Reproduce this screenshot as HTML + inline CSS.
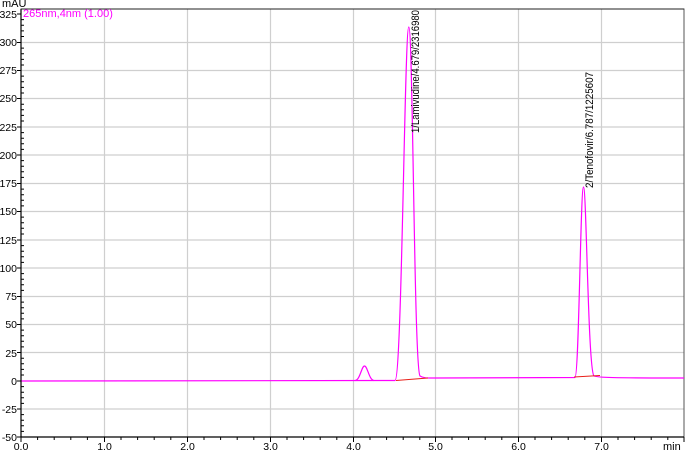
<!DOCTYPE html><html><head><style>body{margin:0;background:#fff}svg{display:block}</style></head><body>
<svg width="685" height="452" xmlns="http://www.w3.org/2000/svg" font-family="Liberation Sans, sans-serif" font-size="11">
<rect width="685" height="452" fill="#fff"/>
<g stroke="#cfcfcf" stroke-width="1.2">
<line x1="104.5" y1="9" x2="104.5" y2="437"/><line x1="187.5" y1="9" x2="187.5" y2="437"/><line x1="270.5" y1="9" x2="270.5" y2="437"/><line x1="353.5" y1="9" x2="353.5" y2="437"/><line x1="435.5" y1="9" x2="435.5" y2="437"/><line x1="518.5" y1="9" x2="518.5" y2="437"/><line x1="601.5" y1="9" x2="601.5" y2="437"/>
<line x1="21" y1="42.5" x2="684" y2="42.5"/><line x1="21" y1="70.5" x2="684" y2="70.5"/><line x1="21" y1="98.5" x2="684" y2="98.5"/><line x1="21" y1="127" x2="684" y2="127"/><line x1="21" y1="155" x2="684" y2="155"/><line x1="21" y1="183.5" x2="684" y2="183.5"/><line x1="21" y1="211.5" x2="684" y2="211.5"/><line x1="21" y1="240" x2="684" y2="240"/><line x1="21" y1="268" x2="684" y2="268"/><line x1="21" y1="296.5" x2="684" y2="296.5"/><line x1="21" y1="324.5" x2="684" y2="324.5"/><line x1="21" y1="352.5" x2="684" y2="352.5"/><line x1="21" y1="409" x2="684" y2="409"/>
</g>
<rect x="21" y="9" width="663" height="428" fill="none" stroke="#555" stroke-width="1"/>
<line x1="21" y1="9" x2="684" y2="9" stroke="#222"/>
<path d="M21,381 L395,380.5 C402,380 404.5,27 408.8,27 C413,27 414,368 420,376 C424,378.5 428,378 436,378 L575,377.5 C579,377 580.5,187 583.5,187 C586.5,187 588,370 594,376 C598,377.5 610,378 684,378" fill="none" stroke="#ff00ff" stroke-width="1.2"/>
<path d="M355,380.5 C360,380.5 361.5,366 364.5,366 C367.5,366 369,380 374,380.5" fill="none" stroke="#ff00ff" stroke-width="1.2"/>
<path d="M396,380.5 L428,378 M574,377 L600,375.5" stroke="#e8201a" stroke-width="1"/>
<text x="23" y="17" fill="#ff00ff">265nm,4nm (1.00)</text>
<text x="2" y="7" fill="#000">mAU</text>
<text x="663" y="450" fill="#000">min</text>
<text transform="translate(419,133) rotate(-90)" fill="#000" textLength="123" lengthAdjust="spacingAndGlyphs">1/Lamivudine/4.679/2316980</text>
<text transform="translate(593,188) rotate(-90)" fill="#000" textLength="116" lengthAdjust="spacingAndGlyphs">2/Tenofovir/6.787/1225607</text>
<g fill="#000" text-anchor="end" font-size="10.5">
<text x="17" y="18">325</text><text x="17" y="46">300</text><text x="17" y="74">275</text><text x="17" y="102">250</text><text x="17" y="131">225</text><text x="17" y="159">200</text><text x="17" y="187">175</text><text x="17" y="215">150</text><text x="17" y="244">125</text><text x="17" y="272">100</text><text x="17" y="300">75</text><text x="17" y="328">50</text><text x="17" y="357">25</text><text x="17" y="385">0</text><text x="17" y="413">-25</text><text x="17" y="441">-50</text>
</g>
<g fill="#000" text-anchor="middle" font-size="10.5">
<text x="21" y="450">0.0</text><text x="104.5" y="450">1.0</text><text x="187.5" y="450">2.0</text><text x="270.5" y="450">3.0</text><text x="353.5" y="450">4.0</text><text x="435.5" y="450">5.0</text><text x="518.5" y="450">6.0</text><text x="601.5" y="450">7.0</text>
</g>
<path d="M21,9 V437 H684" fill="none" stroke="#000" stroke-width="1.2"/>
<path stroke="#000" stroke-width="1" d="
M17,14h4M17,42.5h4M17,70.5h4M17,98.5h4M17,127h4M17,155h4M17,183.5h4M17,211.5h4M17,240h4M17,268h4M17,296.5h4M17,324.5h4M17,352.5h4M17,381h4M17,409h4M17,437h4
M21,442v-5M104.5,442v-5M187.5,442v-5M270.5,442v-5M353.5,442v-5M435.5,442v-5M518.5,442v-5M601.5,442v-5M684,442v-5"/>
<path stroke="#000" stroke-width="1" d="
M21,19.6h3M21,25.3h3M21,30.9h3M21,36.5h3M21,48.1h3M21,53.8h3M21,59.4h3M21,65h3M21,76.1h3M21,81.8h3M21,87.4h3M21,93h3M21,104.2h3M21,109.8h3M21,115.4h3M21,121h3M21,132.6h3M21,138.2h3M21,143.8h3M21,149.4h3M21,160.6h3M21,166.2h3M21,171.8h3M21,177.4h3M21,189.1h3M21,194.7h3M21,200.3h3M21,205.9h3M21,217.1h3M21,222.7h3M21,228.3h3M21,234h3M21,245.6h3M21,251.2h3M21,256.8h3M21,262.4h3M21,273.6h3M21,279.2h3M21,284.8h3M21,290.4h3M21,302.1h3M21,307.7h3M21,313.3h3M21,318.9h3M21,330.1h3M21,335.7h3M21,341.3h3M21,346.9h3M21,358.2h3M21,363.8h3M21,369.4h3M21,375h3M21,386.6h3M21,392.2h3M21,397.8h3M21,403.4h3M21,414.6h3M21,420.2h3M21,425.8h3M21,431.4h3
M37.6,437v3M54.2,437v3M70.8,437v3M87.4,437v3M121,437v3M137.6,437v3M154.2,437v3M170.8,437v3M204,437v3M220.6,437v3M237.2,437v3M253.8,437v3M287,437v3M303.6,437v3M320.2,437v3M336.8,437v3M370,437v3M386.6,437v3M403.2,437v3M419.8,437v3M452,437v3M468.6,437v3M485.2,437v3M501.8,437v3M535,437v3M551.6,437v3M568.2,437v3M584.8,437v3M618,437v3M634.6,437v3M651.2,437v3M667.8,437v3"/>
</svg>
</body></html>
